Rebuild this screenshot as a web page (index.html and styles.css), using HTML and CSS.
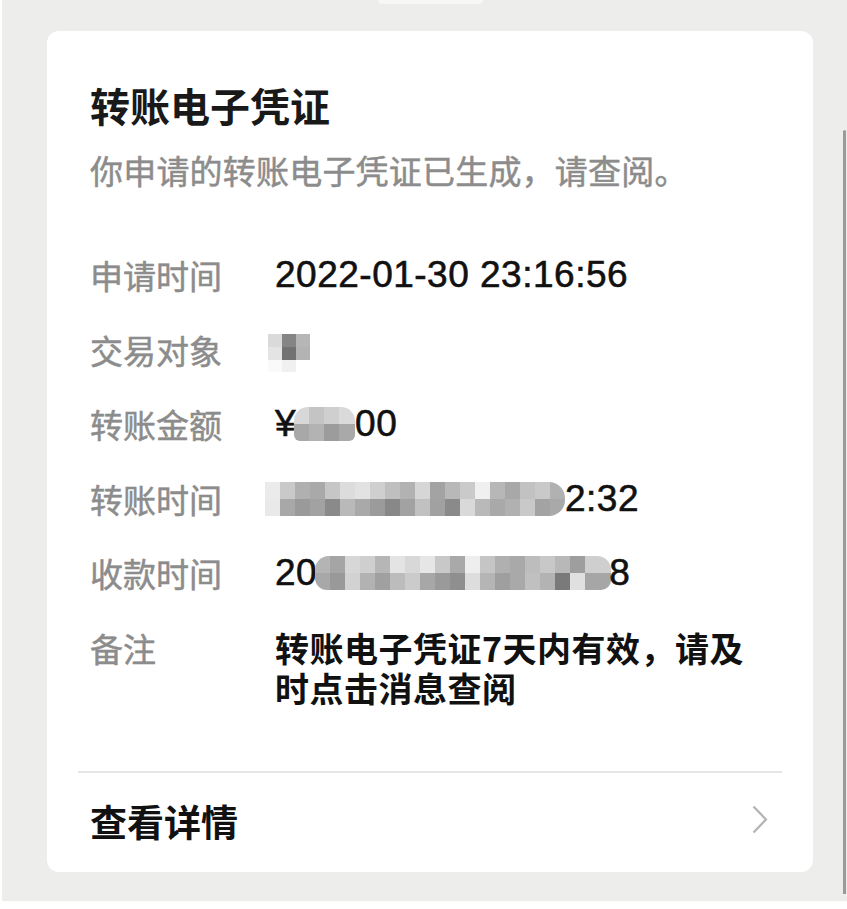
FILE: index.html
```html
<!DOCTYPE html>
<html lang="zh-CN">
<head>
<meta charset="utf-8">
<title>转账电子凭证</title>
<link rel="stylesheet" href="styles.css">
</head>
<body>
<div class="screen">
  <div class="notch"></div>
  <div class="card">
    <div class="card-body">
      <h1 class="title">转账电子凭证</h1>
      <p class="subtitle">你申请的转账电子凭证已生成，请查阅。</p>
      <div class="rows">
        <div class="row">
          <span class="label">申请时间</span>
          <span class="value num">2022-01-30 23:16:56</span>
        </div>
        <div class="row">
          <span class="label">交易对象</span>
          <span class="value"><span class="mosaic m-name"></span></span>
        </div>
        <div class="row">
          <span class="label">转账金额</span>
          <span class="value num">¥<span class="mosaic m-amount"></span>00</span>
        </div>
        <div class="row">
          <span class="label">转账时间</span>
          <span class="value num"><span class="mosaic m-time1"></span>2:32</span>
        </div>
        <div class="row">
          <span class="label">收款时间</span>
          <span class="value num">20<span class="mosaic m-time2"></span>8</span>
        </div>
        <div class="row">
          <span class="label">备注</span>
          <p class="remark">转账电子凭证7天内有效，请及时点击消息查阅</p>
        </div>
      </div>
    </div>
    <div class="divider"></div>
    <div class="footer">
      <span class="footer-text">查看详情</span>
      <svg class="chevron" width="16" height="30" viewBox="0 0 16 30"><polyline points="1.5,1.5 14,14.5 1.5,27.5" fill="none" stroke="#b3b3b3" stroke-width="2.2"/></svg>
    </div>
  </div>
  <div class="scrollbar"></div>
</div>
</body>
</html>
```

FILE: styles.css
```css
html, body {
  margin: 0;
  padding: 0;
  background: #ffffff;
}
body {
  font-family: "Noto Sans CJK SC", "Liberation Sans", sans-serif;
  width: 847px;
  height: 909px;
  overflow: hidden;
}
.screen {
  position: relative;
  margin-left: 2px;
  width: 845px;
  height: 901px;
  background: #ededeb;
  padding-top: 31px;
  box-sizing: border-box;
  overflow: hidden;
}
.notch {
  position: absolute;
  left: 376px;
  top: 0;
  width: 105px;
  height: 4px;
  background: #f7f7f7;
  border-radius: 0 0 5px 5px;
}
.scrollbar {
  position: absolute;
  left: 841px;
  top: 130px;
  width: 3px;
  height: 764px;
  background: #9a9a9a;
  border-radius: 2px 2px 0 0;
}
.card {
  margin-left: 45px;
  width: 766px;
  height: 841px;
  background: #ffffff;
  border-radius: 12px;
  display: flex;
  flex-direction: column;
}
.card-body {
  padding: 54px 0 0 43px;
  height: 740px;
  flex: none;
  box-sizing: border-box;
}
.title {
  margin: 0;
  font-size: 40px;
  line-height: 40px;
  font-weight: 700;
  color: #191919;
}
.subtitle {
  margin: 29px 0 0;
  font-size: 33px;
  line-height: 33px;
  font-weight: 400;
  color: #8c8c8c;
  letter-spacing: 0.2px;
  -webkit-text-stroke: 0.5px #8c8c8c;
}
.rows {
  margin-top: 68px;
  display: flex;
  flex-direction: column;
  gap: 34.5px;
}
.row {
  display: flex;
  align-items: flex-start;
  line-height: 40px;
}
.label {
  width: 185px;
  flex: none;
  font-size: 33px;
  font-weight: 400;
  color: #8c8c8c;
  -webkit-text-stroke: 0.5px #8c8c8c;
}
.value {
  font-size: 33px;
  color: #111111;
  display: flex;
  align-items: center;
  height: 40px;
}
.num {
  font-family: "Liberation Sans", "Noto Sans CJK SC", sans-serif;
  font-size: 37px;
  letter-spacing: 0.5px;
  font-weight: 400;
  -webkit-text-stroke: 0.6px #111111;
}
.remark {
  margin: 0;
  width: 480px;
  font-size: 34px;
  line-height: 40px;
  letter-spacing: 0.5px;
  font-weight: 700;
  color: #111111;
}
.mosaic {
  display: inline-block;
  flex: none;
}
.m-name {
  width: 42px;
  height: 38px;
  margin-left: -7px;
  margin-top: 6px;
  background:
    linear-gradient(to right, #dadada 0 14px, #858585 14px 28px, #b6b6b6 28px 42px) top / 100% 13px no-repeat,
    linear-gradient(to right, #e4e4e4 0 14px, #727272 14px 28px, #b3b3b3 28px 42px) 0 13px / 100% 13px no-repeat,
    linear-gradient(to right, #fafafa 0 14px, #f0f0f0 14px 28px, #ffffff 28px 42px) bottom / 100% 12px no-repeat;
}
.m-amount {
  width: 61px;
  height: 34px;
  margin-left: -2px;
  border-radius: 14px 14px 6px 6px;
  background:
    linear-gradient(to right, #d8d8d8 0 15px, #c4c4c4 15px 30px, #cfcfcf 30px 45px, #dadada 45px 61px) top / 100% 50% no-repeat,
    linear-gradient(to right, #a8a8a8 0 15px, #b3b3b3 15px 30px, #9c9c9c 30px 45px, #a9a9a9 45px 61px) bottom / 100% 50% no-repeat;
}
.m-time1 {
  width: 300px;
  height: 34px;
  margin-left: -10px;
  margin-right: 0;
  border-radius: 0 16px 16px 0;
  background:
    linear-gradient(to right, #ebebeb 0 15px, #c9c9c9 15px 30px, #b0b0b0 30px 45px, #a9a9a9 45px 60px, #c6c6c6 60px 75px, #dcdcdc 75px 90px, #e2e2e2 90px 105px, #cfcfcf 105px 120px, #bfbfbf 120px 135px, #b2b2b2 135px 150px, #d6d6d6 150px 165px, #a3a3a3 165px 180px, #b8b8b8 180px 195px, #cacaca 195px 210px, #f0f0f0 210px 225px, #b7b7b7 225px 240px, #a8a8a8 240px 255px, #c2c2c2 255px 270px, #c9c9c9 270px 285px, #b1b1b1 285px 300px) top / 100% 50% no-repeat,
    linear-gradient(to right, #e9e9e9 0 15px, #a8a8a8 15px 30px, #9a9a9a 30px 45px, #a2a2a2 45px 60px, #8a8a8a 60px 75px, #b9b9b9 75px 90px, #a9a9a9 90px 105px, #9b9b9b 105px 120px, #888888 120px 135px, #a2a2a2 135px 150px, #c1c1c1 150px 165px, #a1a1a1 165px 180px, #8a8a8a 180px 195px, #d9d9d9 195px 210px, #b9b9b9 210px 225px, #a9a9a9 225px 240px, #b1b1b1 240px 255px, #c9c9c9 255px 270px, #a3a3a3 270px 285px, #a9a9a9 285px 300px) bottom / 100% 50% no-repeat;
}
.m-time2 {
  width: 296px;
  height: 34px;
  margin-left: -2px;
  margin-right: -2px;
  border-radius: 14px 14px 10px 12px;
  background:
    linear-gradient(to right, #b4b4b4 0 15px, #a5a5a5 15px 30px, #d7d7d7 30px 45px, #cfcfcf 45px 60px, #b6b6b6 60px 75px, #e4e4e4 75px 90px, #d8d8d8 90px 105px, #e6e6e6 105px 120px, #c8c8c8 120px 135px, #a9a9a9 135px 150px, #eeeeee 150px 165px, #c5c5c5 165px 180px, #b0b0b0 180px 195px, #a9a9a9 195px 210px, #bdbdbd 210px 225px, #c8c8c8 225px 240px, #b8b8b8 240px 255px, #9e9e9e 255px 270px, #cfcfcf 270px 296px) top / 100% 50% no-repeat,
    linear-gradient(to right, #a8a8a8 0 15px, #999999 15px 30px, #d2d2d2 30px 45px, #b2b2b2 45px 60px, #a0a0a0 60px 75px, #bcbcbc 75px 90px, #cbcbcb 90px 105px, #a7a7a7 105px 120px, #9a9a9a 120px 135px, #8f8f8f 135px 150px, #dddddd 150px 165px, #b5b5b5 165px 180px, #9f9f9f 180px 195px, #a9a9a9 195px 210px, #c0c0c0 210px 225px, #b3b3b3 225px 240px, #7a7a7a 240px 255px, #e0e0e0 255px 270px, #a6a6a6 270px 296px) bottom / 100% 50% no-repeat;
}
.divider {
  flex: none;
  margin: 0 31px;
  height: 2px;
  background: #e5e5e5;
}
.footer {
  flex: 1;
  display: flex;
  align-items: center;
  justify-content: space-between;
  padding: 0 45px 4px 43px;
}
.footer-text {
  font-size: 37px;
  line-height: 40px;
  font-weight: 700;
  color: #111111;
}
.chevron {
  display: block;
  margin-top: -2px;
}
```
